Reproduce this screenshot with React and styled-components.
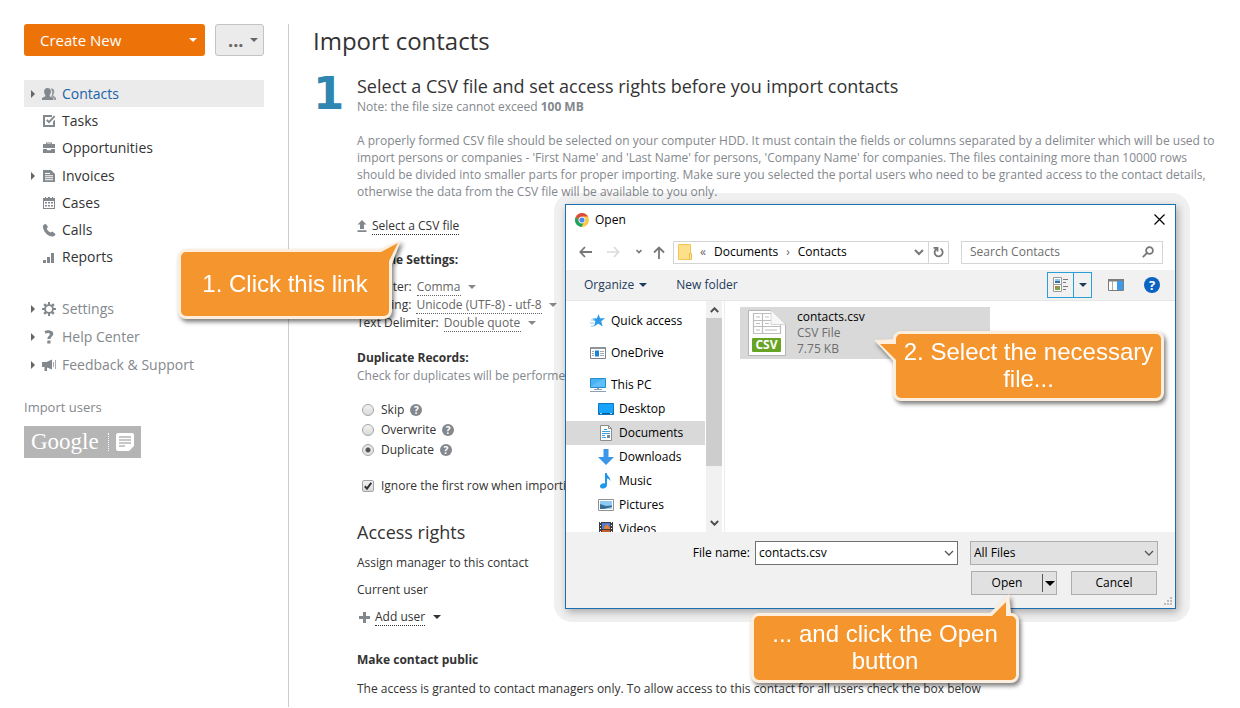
import { useState } from "react";
import styled, { createGlobalStyle, css } from "styled-components";

const menu = [
  { name: "Contacts", icon: "contacts", sub: true, active: true },
  { name: "Tasks", icon: "tasks" },
  { name: "Opportunities", icon: "case" },
  { name: "Invoices", icon: "invoice", sub: true },
  { name: "Cases", icon: "calendar" },
  { name: "Calls", icon: "phone" },
  { name: "Reports", icon: "bars" },
];

const helpMenu = [
  { name: "Settings", icon: "gear", sub: true },
  { name: "Help Center", icon: "question", sub: true },
  { name: "Feedback & Support", icon: "horn", sub: true },
];

const places = [
  { name: "Quick access", icon: "star", top: true, spaced: true },
  { name: "OneDrive", icon: "onedrive", top: true, spaced: true },
  { name: "This PC", icon: "pc", top: true },
  { name: "Desktop", icon: "desktop" },
  { name: "Documents", icon: "document", active: true },
  { name: "Downloads", icon: "download" },
  { name: "Music", icon: "music" },
  { name: "Pictures", icon: "picture" },
  { name: "Videos", icon: "video" },
];

const menuIcons = {
  contacts: (
    <>
      <path d="M8.500 1.600c2.500-.6 3.800.8 3.800 2.800 0 1.600-.4 2.400-1 3.200v1.200l2.700 1.900V13h-2.200v-1.600L9.300 9.600c.9-1.600 1.400-5.400-.8-8z" opacity=".8" />
      <path d="M5.500 1c2.100 0 3.400 1.300 3.400 3.500 0 1.500-.5 2.600-1.200 3.400v1.300l3.500 1.900V13H0v-1.900l3.300-1.900V7.900C2.600 7.100 2.100 6 2.100 4.500 2.100 2.300 3.400 1 5.500 1z" />
    </>
  ),
  tasks: (
    <>
      <path d="M1 1h9v2H3v8h8V7.500l2-2V13H1z" />
      <path d="M4 6.500l1.400-1.300L7 6.800 12 1.500l1.300 1.300L7 9.500z" />
    </>
  ),
  case: (
    <path d="M4 3V1.500h6V3h3v4H1V3zm1.200 0h3.600v-.5H5.200zM1 8h4v1.200h4V8h4v4H1z" />
  ),
  invoice: (
    <path
      fillRule="evenodd"
      d="M1 1h8l4 4v8H1zm2 3v1h5V4zm0 2.300v1h8v-1zm0 2v1h8v-1zm0 2v1h8v-1z"
    />
  ),
  calendar: (
    <path
      fillRule="evenodd"
      d="M1 2h2V1h1v1h2V1h2v1h2V1h1v1h2v11H1zm1 3v7h10V5zm1 1h2v1.500H3zm3 0h2v1.500H6zm3 0h2v1.500H9zM3 9h2v1.500H3zm3 0h2v1.500H6zm3 0h2v1.500H9z"
    />
  ),
  phone: (
    <path d="M2 1.500L4 1l2 3-1.300 1.500C5.400 7.300 6.700 8.800 8.600 9.600L10.300 8.600 13.500 11c-.3 1.600-1.400 2.600-3 2.500C5.500 13.300.6 8 1 3c0-.6.400-1.200 1-1.500z" />
  ),
  bars: <path d="M1 10h3v3H1zM5 7h3v6H5zM9 3h3v10H9z" />,
  gear: (
    <path
      fillRule="evenodd"
      d="M6 0h2v2.200l1.400.6L11 1.300 12.700 3l-1.500 1.600.6 1.400H14v2h-2.200l-.6 1.400 1.500 1.600-1.700 1.700-1.600-1.500-1.400.6V14H6v-2.200l-1.400-.6L3 12.700 1.300 11l1.500-1.600L2.200 8H0V6h2.200l.6-1.400L1.300 3 3 1.300l1.600 1.500L6 2.200zm1 4a3 3 0 1 0 0 6 3 3 0 0 0 0-6z"
    />
  ),
  question: (
    <path d="M2.500 1.500C4 .4 6 .2 8 .5c2.200.4 3.500 1.700 3.300 3.700C11.100 6.300 8.500 6.800 8.500 9H5.300c0-2.700 2.400-3.200 2.500-4.600 0-1.700-2.600-1.600-4.100-.7zM5.300 10.500h3.200v3H5.300z" />
  ),
  horn: (
    <>
      <path d="M0 4h4.500L10 1.500v10L5 9.400V13H2.500V9H0z" />
      <path d="M11 4h1v5h-1zM13 2h1v9h-1z" opacity=".7" />
    </>
  ),
};

const placeIcons = {
  star: (
    <>
      <path d="M8.500 1l1.600 4.200 5 .1-3.900 3 1.500 5.200-4.300-2.700-4.500 2.700 1.500-4.900-3-3 4.600-.3z" fill="#2f9be8" />
      <path d="M1 7h4M0 10h4M1 13h3" stroke="#8cc6ee" />
    </>
  ),
  onedrive: (
    <>
      <path d="M.5 2.500h15v11H.5z" fill="#fff" stroke="#7c8489" />
      <path d="M1 2h14v2H1z" fill="#8d959a" />
      <path d="M5 5.500h4v6H5z" fill="#1583d8" />
      <path d="M2 6.500h2M2 8.500h2M2 10.500h2M10 6.500h4M10 8.500h4M10 10.500h4" stroke="#a4abaf" />
    </>
  ),
  pc: (
    <>
      <path d="M.5 1.500h15v9H.5z" fill="#47b3f5" stroke="#258bcb" />
      <path d="M1 9L13 2h2v8H1z" fill="#79ccff" opacity=".5" />
      <path d="M7 11h2v1.500H7z" fill="#8ea3af" />
      <path d="M4 12.500h8M0 14.500h16" stroke="#8ba1ae" />
    </>
  ),
  desktop: (
    <>
      <path d="M.5 2.500h15v11H.5z" fill="#17a2fc" stroke="#0b76bf" />
      <path d="M1 12.500h14" stroke="#075e9c" />
      <path d="M2 12.500h2M12 12.500h2" stroke="#a6dcff" />
    </>
  ),
  document: (
    <>
      <path d="M2.500.5h8l3 3v12h-11z" fill="#fff" stroke="#8d8d8d" />
      <path d="M10.500.5v3h3" fill="none" stroke="#8d8d8d" />
      <path d="M4 6.500h8M4 8.500h8M4 10.500h3M4 12.500h4M6 4.500h3" stroke="#3b9fe4" />
      <path d="M9 10h3v3H9z" fill="#778894" />
    </>
  ),
  download: <path d="M5.500 0h5v8H16l-8 8-8-8h5.500z" fill="#3a96e8" />,
  music: (
    <path d="M7 0h1.800c0 3 4 4 3.700 8.500-.4-1.700-1.700-2.600-3.500-2.900v6.400c0 2.200-1.900 3.600-4 3.600-1.700 0-3-.8-3-2.300 0-2 2.500-3.500 5-2.900z" fill="#1e97ea" />
  ),
  picture: (
    <>
      <path d="M.5 2.500h15v11H.5z" fill="#fff" stroke="#929292" />
      <path d="M2 4h12v8H2z" fill="#8fcaf5" />
      <path d="M2 7l6 2 6-.5V12H2z" fill="#376e98" />
      <path d="M6 12l8-2v2z" fill="#b5d3e8" />
    </>
  ),
  video: (
    <>
      <path d="M1 1h14v15H1z" fill="#3d3d40" />
      <path d="M4 2h8v6H4z" fill="#4b7dd0" />
      <path d="M4 9h8v6H4z" fill="#c55c2c" />
      <path d="M6 6l3-3 3 4v1H6z" fill="#e78137" />
      <path d="M2.500 1v15M13.500 1v15" stroke="#fff" strokeDasharray="1 2" />
    </>
  ),
};

const MenuIcon = ({ name }) => (
  <svg width="14" height="14" viewBox="0 0 14 14" fill="#83888d" aria-hidden="true">
    {menuIcons[name]}
  </svg>
);

const PlaceIcon = ({ name }) => (
  <svg width="16" height="16" viewBox="0 0 16 16" aria-hidden="true">
    {placeIcons[name]}
  </svg>
);

const ChromeIcon = () => (
  <svg width="14" height="14" viewBox="0 0 14 14" aria-hidden="true">
    <circle cx="7" cy="7" r="7" fill="#f9cb44" />
    <path d="M1 3.400A7 7 0 0 1 13.100 3.600H7A3.400 3.400 0 0 0 4 8.600z" fill="#dd4b3e" />
    <path d="M1 3.400L4 8.700A3.400 3.400 0 0 0 8.300 10.200L6.500 14A7 7 0 0 1 1 3.400z" fill="#1da362" />
    <circle cx="7" cy="7" r="3.300" fill="#fff" />
    <circle cx="7" cy="7" r="2.600" fill="#4a8af4" />
  </svg>
);

const Chevron = ({ color = "#555" }) => (
  <svg width="10" height="10" viewBox="0 0 10 10" fill="none" stroke={color} strokeWidth="1.300" aria-hidden="true">
    <path d="M1 3l4 4 4-4" />
  </svg>
);

const CsvIcon = () => (
  <svg width="40" height="48" viewBox="0 0 40 48" aria-hidden="true">
    <path d="M1.500 1.500h22L38.500 15.500v31h-37z" fill="#fff" stroke="#b5b5b5" />
    <path
      d="M6.500 4.500h27v20h-27zM6.500 11.500h27M6.500 17.500h27M15.500 4v20M9 8h4M18 8h4M9 14.500h4M18 14.500h4M9 21h4M18 21h12"
      fill="none"
      stroke="#bdbdbd"
      strokeWidth="1.200"
    />
    <path d="M24 0h16v15H24z" fill="#d9d9d9" />
    <path d="M24 1v14.500h14.500z" fill="#f7f7f7" stroke="#cfcfcf" strokeWidth=".8" />
    <rect x="5" y="29" width="29" height="14" rx="1" fill="#67a324" />
    <text x="19.500" y="40" fontSize="12" fontWeight="700" fontFamily="Open Sans, sans-serif" fill="#fff" textAnchor="middle">
      CSV
    </text>
  </svg>
);

function MenuList({ items, muted }) {
  return (
    <Menu>
      {items.map((item) => (
        <MenuItem key={item.name} $sub={item.sub} $active={item.active}>
          <Arrow $shown={item.sub} />
          <MenuIcon name={item.icon} />
          <MenuLink href="#" $muted={muted} $active={item.active}>
            {item.name}
          </MenuLink>
        </MenuItem>
      ))}
    </Menu>
  );
}

function Setting({ label, value }) {
  return (
    <SettingRow>
      {label}:
      <InlineSelect defaultValue={value}>
        <option>{value}</option>
      </InlineSelect>
      <Caret $color="#83888d" />
    </SettingRow>
  );
}

function FileDialog() {
  const [fileName, setFileName] = useState("contacts.csv");

  return (
    <DialogFrame>
      <Dialog role="dialog" aria-label="Open">
        <TitleBar>
          <ChromeIcon />
          <span>Open</span>
          <PlainButton aria-label="Close">
            <svg width="11" height="11" viewBox="0 0 11 11" stroke="#000" strokeWidth="1.200">
              <path d="M.5.5l10 10M10.500.5l-10 10" />
            </svg>
          </PlainButton>
        </TitleBar>

        <NavBar>
          <NavButtons>
            <PlainButton aria-label="Back">
              <svg width="13" height="12" viewBox="0 0 13 12" fill="none" stroke="#777" strokeWidth="1.800">
                <path d="M13 6H1.500M6 1L1.300 6 6 11" />
              </svg>
            </PlainButton>
            <PlainButton aria-label="Forward">
              <svg width="13" height="12" viewBox="0 0 13 12" fill="none" stroke="#dadada" strokeWidth="1.600">
                <path d="M0 6h11.500M7 1l4.700 5L7 11" />
              </svg>
            </PlainButton>
            <PlainButton aria-label="Recent locations">
              <svg width="8" height="6" viewBox="0 0 8 6" fill="none" stroke="#777" strokeWidth="1.600">
                <path d="M1.500 1L4 3.500 6.500 1" />
              </svg>
            </PlainButton>
            <PlainButton aria-label="Up">
              <svg width="12" height="13" viewBox="0 0 12 13" fill="none" stroke="#777" strokeWidth="1.800">
                <path d="M6 13V1.500M1 6.500l5-5 5 5" />
              </svg>
            </PlainButton>
          </NavButtons>
          <Address>
            <svg width="14" height="16" viewBox="0 0 14 16" aria-hidden="true">
              <path d="M.5.5h12v15H.5z" fill="#ffe08a" stroke="#f3c653" />
              <path d="M11.500 9.500h2v6h-2z" fill="#ffe9a8" stroke="#edbd48" />
            </svg>
            <Quiet>«</Quiet>
            <span>Documents</span>
            <Quiet>›</Quiet>
            <span>Contacts</span>
            <AddressEnd aria-label="Previous locations">
              <svg width="10" height="10" viewBox="0 0 10 10" fill="none" stroke="#777" strokeWidth="2">
                <path d="M1 3l4 4 4-4" />
              </svg>
            </AddressEnd>
            <Refresh aria-label="Refresh">
              <svg width="11" height="12" viewBox="0 0 11 12" fill="none" stroke="#777" strokeWidth="1.800">
                <path d="M7.500 2.800A4 4 0 1 1 3.400 3M.5 1.800h4v3.800" />
              </svg>
            </Refresh>
          </Address>
          <Search>
            <input type="search" placeholder="Search Contacts" aria-label="Search Contacts" />
            <svg width="12" height="12" viewBox="0 0 12 12" fill="none" stroke="#777" strokeWidth="1.800">
              <circle cx="7.500" cy="4.500" r="3.400" />
              <path d="M5 7L.8 11.200" />
            </svg>
          </Search>
        </NavBar>

        <Toolbar>
          <ToolButton>
            Organize <Caret $color="#1e3c5c" />
          </ToolButton>
          <ToolButton>New folder</ToolButton>
          <ViewSwitch>
            <PlainButton aria-label="Change your view">
              <svg width="16" height="16" viewBox="0 0 16 16" fill="none">
                <path d="M.5.500h8v7h-8zM.5 7.500h8v7h-8z" fill="#fff" stroke="#9a9a9a" />
                <path d="M2 2h5v2H2z" fill="#8fc8ef" />
                <path d="M2 4h5v2H2z" fill="#3b6f9e" />
                <path d="M2 9h5v4H2z" fill="#7aa64a" />
                <path d="M2 9h2v2H2z" fill="#d8693c" />
                <path d="M10 2.500h5M10 5.500h3M10 9.500h5M10 12.500h3" stroke="#777" />
              </svg>
            </PlainButton>
            <PlainButton aria-label="More options">
              <Caret $color="#1e3c5c" />
            </PlainButton>
          </ViewSwitch>
          <PlainButton aria-label="Show the preview pane">
            <svg width="16" height="12" viewBox="0 0 16 12">
              <path d="M.5.500h15v11H.5z" fill="#fff" stroke="#7d7d7d" />
              <path d="M0 0h16v2.500H0z" fill="#7d7d7d" />
              <path d="M4.500 2v9" stroke="#aaa" />
              <path d="M9 2h6v9H9z" fill="#3c9be8" />
            </svg>
          </PlainButton>
          <HelpButton aria-label="Get help">?</HelpButton>
        </Toolbar>

        <Browser>
          <Places>
            {places.map((place) => (
              <Place key={place.name} $top={place.top} $spaced={place.spaced} $active={place.active}>
                <PlaceIcon name={place.icon} />
                {place.name}
              </Place>
            ))}
          </Places>
          <ScrollBar>
            <svg width="9" height="6" viewBox="0 0 9 6" fill="none" stroke="#505050" strokeWidth="2">
              <path d="M.8 5l3.700-3.700L8.200 5" />
            </svg>
            <Thumb />
            <svg width="9" height="6" viewBox="0 0 9 6" fill="none" stroke="#505050" strokeWidth="2">
              <path d="M.8 1l3.700 3.700L8.200 1" />
            </svg>
          </ScrollBar>
          <Files>
            <FileCard>
              <CsvIcon />
              <div>
                <FileName>contacts.csv</FileName>
                <p>CSV File</p>
                <p>7.75 KB</p>
              </div>
            </FileCard>
          </Files>
        </Browser>

        <DialogFooter>
          <label htmlFor="file-name">File name:</label>
          <Combo $white>
            <input id="file-name" value={fileName} onChange={(e) => setFileName(e.target.value)} />
            <Chevron />
          </Combo>
          <Combo>
            <select aria-label="File type">
              <option>All Files</option>
            </select>
            <Chevron />
          </Combo>
          <DialogButtons>
            <SplitButton>
              <button>Open</button>
              <button aria-label="Open options">
                <Caret $color="#000" $large />
              </button>
            </SplitButton>
            <CancelButton>Cancel</CancelButton>
          </DialogButtons>
          <Grip width="9" height="9" viewBox="0 0 9 9" fill="#bdbdbd" aria-hidden="true">
            <path d="M6 0h2v2H6zM3 3h2v2H3zM6 3h2v2H6zM0 6h2v2H0zM3 6h2v2H3zM6 6h2v2H6z" />
          </Grip>
        </DialogFooter>
      </Dialog>
    </DialogFrame>
  );
}

export default function App() {
  const [mode, setMode] = useState("Duplicate");
  const [skipHeader, setSkipHeader] = useState(true);

  return (
    <>
      <GlobalStyle />
      <Page>
        <Sidebar>
          <Actions>
            <CreateButton>
              Create New <Caret $color="#fff" />
            </CreateButton>
            <MoreButton aria-label="More">
              <b>...</b>
              <Caret $color="#666" />
            </MoreButton>
          </Actions>
          <MenuList items={menu} />
          <MenuList items={helpMenu} muted />
          <ImportTitle>Import users</ImportTitle>
          <GoogleButton>
            <span>Google</span>
            <svg width="18" height="18" viewBox="0 0 18 18" aria-hidden="true">
              <path d="M2 0h14a2 2 0 0 1 2 2v11l-5 5H2a2 2 0 0 1-2-2V2a2 2 0 0 1 2-2z" fill="#fff" />
              <path d="M3 4h12M3 7h12M3 10h12M3 13h6" stroke="#b5b5b5" strokeWidth="1.500" />
            </svg>
          </GoogleButton>
        </Sidebar>

        <Main>
          <PageTitle>Import contacts</PageTitle>
          <Step>
            <StepNumber>1</StepNumber>
            <div>
              <StepTitle>Select a CSV file and set access rights before you import contacts</StepTitle>
              <Muted>
                Note: the file size cannot exceed <b>100 MB</b>
              </Muted>
              <Description>
                A properly formed CSV file should be selected on your computer HDD. It must contain the fields or
                columns separated by a delimiter which will be used to import persons or companies - 'First Name' and
                'Last Name' for persons, 'Company Name' for companies. The files containing more than 10000 rows should
                be divided into smaller parts for proper importing. Make sure you selected the portal users who need to
                be granted access to the contact details, otherwise the data from the CSV file will be available to you
                only.
              </Description>
              <LinkRow>
                <svg width="10" height="12" viewBox="0 0 10 12" fill="#83888d" aria-hidden="true">
                  <path d="M5 0l4.500 4.500H7V9H3V4.500H.5zM.5 10.300h9V12h-9z" />
                </svg>
                <DottedLink href="#">Select a CSV file</DottedLink>
              </LinkRow>

              <SmallTitle>CSV File Settings:</SmallTitle>
              <Settings>
                <Setting label="Delimiter" value="Comma" />
                <Setting label="Encoding" value="Unicode (UTF-8) - utf-8" />
                <Setting label="Text Delimiter" value="Double quote" />
              </Settings>

              <SmallTitle>Duplicate Records:</SmallTitle>
              <Muted>Check for duplicates will be performed by email</Muted>
              <Options>
                {["Skip", "Overwrite", "Duplicate"].map((name) => (
                  <Option key={name}>
                    <Radio type="radio" name="mode" checked={mode === name} onChange={() => setMode(name)} />
                    {name}
                    <Hint>?</Hint>
                  </Option>
                ))}
              </Options>
              <Option>
                <CheckWrap>
                  <Checkbox
                    type="checkbox"
                    checked={skipHeader}
                    onChange={(e) => setSkipHeader(e.target.checked)}
                  />
                  {skipHeader && (
                    <svg width="8" height="8" viewBox="0 0 8 8" fill="none" stroke="#333" strokeWidth="2">
                      <path d="M.8 4.200L3 6.600 7.300.8" />
                    </svg>
                  )}
                </CheckWrap>
                Ignore the first row when importing
              </Option>

              <AccessTitle>Access rights</AccessTitle>
              <AccessLine>Assign manager to this contact</AccessLine>
              <AccessLine>Current user</AccessLine>
              <LinkRow>
                <svg width="13" height="11" viewBox="-2 0 13 11" fill="#83888d" aria-hidden="true">
                  <path d="M4 0h3v4h4v3H7v4H4V7H0V4h4z" />
                </svg>
                <DottedLink href="#">Add user</DottedLink>
                <Caret $color="#333" />
              </LinkRow>
              <PublicTitle>Make contact public</PublicTitle>
              <p>
                The access is granted to contact managers only. To allow access to this contact for all users check the
                box below
              </p>
            </div>
          </Step>
        </Main>
      </Page>

      <FileDialog />

      <ClickNote>
        <Tail $place="topRight" width="26" height="26" viewBox="0 0 26 26">
          <path d="M0 12L23 2 14 26 10 16z" fill="#fdeedd" />
          <path d="M3 14L20 5 11 23V26H3z" fill="#f4952e" />
        </Tail>
        1. Click this link
      </ClickNote>
      <SelectNote>
        <Tail $place="left" width="26" height="26" viewBox="0 0 26 26">
          <path d="M1 2L22 1V25z" fill="#fdeedd" />
          <path d="M7 6H26V22H23z" fill="#f4952e" />
        </Tail>
        2. Select the necessary file...
      </SelectNote>
      <OpenNote>
        <Tail $place="top" width="26" height="26" viewBox="0 0 26 26">
          <path d="M4 20L23 1 25 20z" fill="#fdeedd" />
          <path d="M6 23L20 9V26H6z" fill="#f4952e" />
        </Tail>
        ... and click the Open button
      </OpenNote>
    </>
  );
}

const GlobalStyle = createGlobalStyle`
  * {
    box-sizing: border-box;
  }
  body {
    margin: 0;
    background: #fff;
    color: #333;
    font: 12px/18px "Open Sans", sans-serif;
  }
  h1, h2, h3, p, ul {
    margin: 0;
    padding: 0;
  }
  ul {
    list-style: none;
  }
  button, input, select {
    font: inherit;
    color: inherit;
  }
`;

const Page = styled.div`
  display: grid;
  grid-template-columns: 240px 1fr;
  column-gap: 24px;
  min-height: 100vh;
  padding: 24px 24px 1px;
`;

const Sidebar = styled.nav`
  min-width: 0;
`;

const Actions = styled.div`
  display: flex;
  gap: 10px;
  margin-bottom: 24px;
`;

const Caret = styled.span`
  width: 0;
  height: 0;
  flex: none;
  border: ${(props) => (props.$large ? "5px" : "4px")} solid transparent;
  border-top-color: ${(props) => props.$color};
  border-bottom-width: 0;
`;

const CreateButton = styled.button`
  flex: 1;
  height: 32px;
  padding: 0 8px 0 16px;
  display: flex;
  align-items: center;
  justify-content: space-between;
  border: 0;
  border-radius: 3px;
  background: #ed7309;
  color: #fff;
  font-size: 15px;
`;

const MoreButton = styled.button`
  width: 49px;
  height: 32px;
  padding: 0 5px 0 12px;
  display: flex;
  align-items: center;
  justify-content: space-between;
  border: 1px solid #c3c3c3;
  border-radius: 3px;
  background: #ebebeb;
  color: #666;

  b {
    font-size: 18px;
  }
`;

const Menu = styled.ul`
  & + & {
    margin-top: 25px;
  }
`;

const MenuItem = styled.li`
  display: flex;
  align-items: center;
  height: 27px;
  margin-top: ${(props) => (props.$sub ? "1px" : 0)};
  padding-left: 7px;
  background: ${(props) => (props.$active ? "#ebebeb" : "none")};

  &:first-child {
    margin-top: 0;
  }
`;

const Arrow = styled.span`
  margin-right: 7px;
  border: 4px solid transparent;
  border-left-color: ${(props) => (props.$shown ? "#666" : "transparent")};
  border-right-width: 0;
`;

const MenuLink = styled.a`
  margin-left: 6px;
  font-size: 14px;
  text-decoration: none;
  color: ${(props) => (props.$active ? "#1a63a9" : props.$muted ? "#83888d" : "#333")};
`;

const ImportTitle = styled.p`
  margin-top: 20px;
  margin-bottom: 10px;
  font-size: 13px;
  color: #83888d;
`;

const GoogleButton = styled.button`
  display: flex;
  align-items: center;
  height: 32px;
  padding: 0 7px;
  border: 0;
  background: #b5b5b5;
  color: #fff;

  span {
    padding-right: 9px;
    margin-right: 7px;
    border-right: 1px dotted #fff;
    font: 23px/18px "Liberation Serif", serif;
  }
`;

const Main = styled.main`
  padding-left: 24px;
  border-left: 1px solid #ccc;
`;

const PageTitle = styled.h1`
  font-size: 24px;
  line-height: 34px;
  font-weight: 400;
`;

const Step = styled.section`
  display: grid;
  grid-template-columns: 44px 1fr;
  margin-top: 16px;
`;

const StepNumber = styled.div`
  font: 700 45px/40px "DejaVu Sans", sans-serif;
  color: #2e86b1;
`;

const StepTitle = styled.h2`
  font-size: 18px;
  line-height: 24px;
  font-weight: 400;
`;

const Muted = styled.p`
  line-height: 17px;
  color: #83888d;
`;

const Description = styled(Muted)`
  margin: 17px 0;
`;

const LinkRow = styled.div`
  display: flex;
  align-items: center;
  gap: 5px;
`;

const DottedLink = styled.a`
  border-bottom: 1px dotted #333;
  line-height: 17px;
  color: #333;
  text-decoration: none;

  & + ${Caret} {
    margin-left: 3px;
  }
`;

const SmallTitle = styled.h3`
  margin-top: 16px;
  font-size: 12px;
  line-height: 18px;
  font-weight: 700;
`;

const Settings = styled.div`
  margin: 9px 0 17px;
`;

const SettingRow = styled.label`
  display: flex;
  align-items: center;
  height: 18px;
`;

const InlineSelect = styled.select`
  appearance: none;
  height: 17px;
  margin: 0 7px 0 5px;
  padding: 0;
  border: 0;
  border-bottom: 1px dotted #666;
  background: none;
  color: #666;
  line-height: 16px;
`;

const Options = styled.div`
  margin: 16px 0;
`;

const Option = styled.label`
  display: flex;
  align-items: center;
  height: 20px;
  padding-left: 5px;
`;

const boxStyle = css`
  appearance: none;
  display: block;
  width: 12px;
  height: 12px;
  margin: 0;
  border: 1px solid #a5a5a5;
  background: linear-gradient(#f2f2f2, #d9d9d9);
`;

const Radio = styled.input`
  ${boxStyle}
  margin-right: 7px;
  border-radius: 50%;

  &:checked {
    background: radial-gradient(circle, #555 0 2px, #e5e5e5 3px);
  }
`;

const CheckWrap = styled.span`
  position: relative;
  margin-right: 7px;

  svg {
    position: absolute;
    left: 2px;
    top: 2px;
    pointer-events: none;
  }
`;

const Checkbox = styled.input`
  ${boxStyle}
  border-radius: 2px;
`;

const Hint = styled.span`
  width: 12px;
  height: 12px;
  margin-left: 6px;
  border-radius: 50%;
  background: #83888d;
  color: #fff;
  font-size: 10px;
  line-height: 12px;
  font-weight: 700;
  text-align: center;
`;

const AccessTitle = styled(StepTitle)`
  margin: 24px 0 10px;
`;

const AccessLine = styled.p`
  margin-bottom: 9px;
`;

const PublicTitle = styled(SmallTitle)`
  margin: 25px 0 11px;
`;

/* File picker */
const DialogFrame = styled.div`
  position: absolute;
  left: 554px;
  top: 193px;
  padding: 11px 14px 13px 11px;
  border-radius: 18px;
  background: rgba(0, 0, 0, 0.06);
`;

const Dialog = styled.div`
  width: 611px;
  border: 1px solid #1a6fb0;
  background: #fff;
  color: #000;
  box-shadow: 2px 3px 8px rgba(0, 0, 0, 0.3);
`;

const PlainButton = styled.button`
  display: flex;
  align-items: center;
  justify-content: center;
  padding: 0;
  border: 0;
  background: none;
`;

const TitleBar = styled.header`
  display: flex;
  align-items: center;
  gap: 6px;
  height: 29px;
  padding: 0 10px 0 9px;

  ${PlainButton} {
    margin-left: auto;
  }
`;

const NavBar = styled.div`
  display: flex;
  align-items: center;
  height: 36px;
  padding: 0 12px 0 13px;
`;

const NavButtons = styled.div`
  display: flex;
  gap: 15px;
  margin-right: 8px;

  ${PlainButton}:last-child {
    margin-left: -5px;
  }
`;

const Address = styled.div`
  flex: 1;
  display: flex;
  align-items: center;
  gap: 8px;
  height: 23px;
  padding-left: 4px;
  border: 1px solid #d5d5d5;
`;

const Quiet = styled.span`
  color: #666;
`;

const AddressEnd = styled(PlainButton)`
  margin-left: auto;
`;

const Refresh = styled(PlainButton)`
  align-self: stretch;
  width: 20px;
  margin-left: -4px;
  border-left: 1px solid #d5d5d5;
`;

const Search = styled.div`
  display: flex;
  align-items: center;
  width: 202px;
  height: 23px;
  margin-left: 12px;
  padding: 0 8px;
  border: 1px solid #d5d5d5;

  input {
    flex: 1;
    min-width: 0;
    padding: 0;
    border: 0;
    outline: 0;
  }

  input::placeholder {
    color: #6d6d6d;
  }
`;

const Toolbar = styled.div`
  display: flex;
  align-items: center;
  height: 31px;
  padding: 0 15px 0 18px;
  border-bottom: 1px solid #e6e6e6;
  background: #f1f1f1;
`;

const ToolButton = styled(PlainButton)`
  gap: 5px;
  margin-right: 29px;
  color: #1e3c5c;
`;

const ViewSwitch = styled.div`
  display: flex;
  height: 26px;
  margin-left: auto;
  margin-right: 16px;
  border: 1px solid #2a9fd6;

  ${PlainButton} {
    width: 25px;
  }

  ${PlainButton} + ${PlainButton} {
    width: 18px;
    border-left: 1px solid #2a9fd6;
  }
`;

const HelpButton = styled.button`
  width: 16px;
  height: 16px;
  margin-left: 20px;
  padding: 0;
  border: 0;
  border-radius: 50%;
  background: #0b62c1;
  color: #fff;
  font-size: 13px;
  line-height: 16px;
  font-weight: 700;
`;

const Browser = styled.div`
  display: flex;
  height: 231px;
`;

const Places = styled.ul`
  width: 139px;
  padding-top: 8px;
  overflow: hidden;
`;

const Place = styled.li`
  display: flex;
  align-items: center;
  gap: 5px;
  height: 24px;
  margin-bottom: ${(props) => (props.$spaced ? "8px" : 0)};
  padding-left: ${(props) => (props.$top ? "24px" : "32px")};
  background: ${(props) => (props.$active ? "#d9d9d9" : "none")};
`;

const ScrollBar = styled.div`
  width: 16px;
  margin-left: 1px;
  padding: 6px 0;
  display: flex;
  flex-direction: column;
  align-items: center;
  background: #f1f1f1;

  svg:last-child {
    margin-top: auto;
  }
`;

const Thumb = styled.div`
  align-self: stretch;
  height: 148px;
  margin-top: 5px;
  background: #cdcdcd;
`;

const Files = styled.div`
  flex: 1;
  margin-left: 2px;
  padding: 6px 15px;
  border-left: 1px solid #eee;
`;

const FileCard = styled.div`
  display: flex;
  align-items: center;
  gap: 10px;
  width: 250px;
  height: 52px;
  padding-left: 7px;
  background: #d9d9d9;
  color: #6d6d6d;
  line-height: 16px;
`;

const FileName = styled.p`
  color: #000;
`;

const DialogFooter = styled.footer`
  position: relative;
  display: grid;
  grid-template-columns: 1fr 203px 188px;
  column-gap: 12px;
  row-gap: 6px;
  padding: 9px 17px 13px 0;
  background: #f1f1f1;

  label {
    justify-self: end;
    margin-right: -7px;
    line-height: 24px;
  }
`;

const Combo = styled.div`
  display: flex;
  align-items: center;
  height: 24px;
  padding: 0 3px;
  border: 1px solid ${(props) => (props.$white ? "#707070" : "#adadad")};
  background: ${(props) => (props.$white ? "#fff" : "#e1e1e1")};

  input,
  select {
    appearance: none;
    flex: 1;
    min-width: 0;
    padding: 0;
    border: 0;
    outline: 0;
    background: none;
  }
`;

const DialogButtons = styled.div`
  grid-column: 3;
  display: flex;
  gap: 14px;
  padding: 0 1px;
`;

const SplitButton = styled.div`
  flex: 1;
  display: flex;
  align-items: center;
  height: 24px;
  border: 1px solid #adadad;
  background: #e1e1e1;

  button {
    flex: 1;
    display: flex;
    justify-content: center;
    align-items: center;
    height: 18px;
    padding: 0;
    border: 0;
    background: none;
  }

  button + button {
    flex: none;
    width: 14px;
    border-left: 1px solid #555;
  }
`;

const CancelButton = styled.button`
  flex: 1;
  height: 24px;
  padding: 0;
  border: 1px solid #adadad;
  background: #e1e1e1;
`;

const Grip = styled.svg`
  position: absolute;
  right: 2px;
  bottom: 2px;
`;

/* Instruction balloons */
const Note = styled.div`
  position: absolute;
  display: flex;
  align-items: center;
  justify-content: center;
  height: 70px;
  padding-bottom: 2px;
  border: 3px solid #fdeedd;
  border-radius: 8px;
  background: #f4952e;
  color: #fff;
  font: 24px/27px "Liberation Sans", sans-serif;
  text-align: center;
  filter: drop-shadow(2px 3px 2px rgba(0, 0, 0, 0.5));
`;

const ClickNote = styled(Note)`
  left: 178px;
  top: 249px;
  width: 214px;
`;

const SelectNote = styled(Note)`
  left: 893px;
  top: 331px;
  width: 271px;
`;

const OpenNote = styled(Note)`
  left: 751px;
  top: 613px;
  width: 268px;
`;

const tailPlaces = {
  topRight: "right: -15px; top: -14px;",
  left: "left: -23px; top: 4px;",
  top: "right: 4px; top: -23px;",
};

const Tail = styled.svg`
  position: absolute;
  ${(props) => tailPlaces[props.$place]}
`;
